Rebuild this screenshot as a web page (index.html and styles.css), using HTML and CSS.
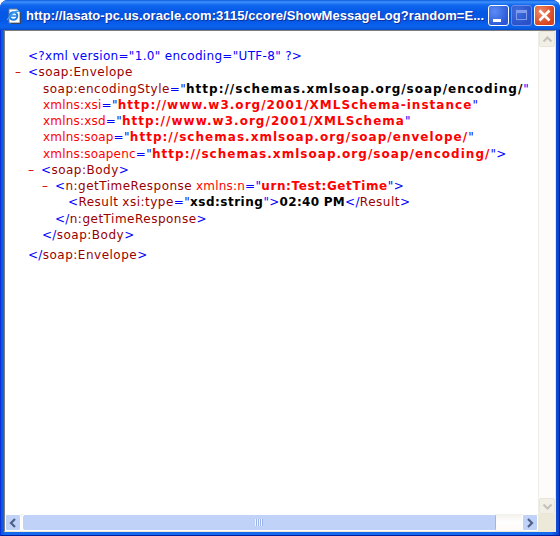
FILE: index.html
```html
<!DOCTYPE html>
<html>
<head>
<meta charset="utf-8">
<title>ShowMessageLog</title>
<link rel="stylesheet" href="styles.css">
</head>
<body>
<div class="window">
  <div class="titlebar">
    <svg class="app-icon" width="16" height="16" viewBox="0 0 16 16">
      <path d="M3 1h8l3 3v11H3z" fill="#fff" stroke="#6b7a90"/>
      <path d="M14.500 4.500V15.500H5" fill="none" stroke="#39465c"/>
      <circle cx="7.500" cy="8" r="3.800" fill="none" stroke="#1f7fe0" stroke-width="2"/>
      <path d="M4 8h7" stroke="#1f7fe0" stroke-width="1.500"/>
      <path d="M1 12C3 9 8 3 13 3" fill="none" stroke="#3aa0f0" stroke-width="1.300"/>
    </svg>
    <div class="title">http://lasato-pc.us.oracle.com:3115/ccore/ShowMessageLog?random=E...</div>
    <div class="controls">
      <div class="ctl ctl-min"><span class="min-glyph"></span></div>
      <div class="ctl ctl-max"><span class="max-glyph"></span></div>
      <div class="ctl ctl-close">
        <svg width="19" height="19" viewBox="0 0 19 19"><path d="M4.500 4.500l10 10M14.500 4.500l-10 10" stroke="#fff" stroke-width="2.600" fill="none"/></svg>
      </div>
    </div>
  </div>
  <div class="client">
    <div class="main-row">
      <div class="doc">
        <div class="ln i1"><span class="b">&lt;?xml version="1.0" encoding="UTF-8" ?&gt;</span></div>
        <div class="ln i0"><span class="dash">–</span><span class="b">&lt;</span><span class="m">soap:Envelope</span></div>
        <div class="ln attr"><span class="m">soap:encodingStyle</span><span class="b">="</span><span class="v">http://schemas.xmlsoap.org/soap/encoding/</span><span class="b">"</span></div>
        <div class="ln attr"><span class="r">xmlns:xsi</span><span class="b">="</span><span class="rv">http://www.w3.org/2001/XMLSchema-instance</span><span class="b">"</span></div>
        <div class="ln attr"><span class="r">xmlns:xsd</span><span class="b">="</span><span class="rv">http://www.w3.org/2001/XMLSchema</span><span class="b">"</span></div>
        <div class="ln attr"><span class="r">xmlns:soap</span><span class="b">="</span><span class="rv">http://schemas.xmlsoap.org/soap/envelope/</span><span class="b">"</span></div>
        <div class="ln attr"><span class="r">xmlns:soapenc</span><span class="b">="</span><span class="rv">http://schemas.xmlsoap.org/soap/encoding/</span><span class="b">"&gt;</span></div>
        <div class="ln i1"><span class="dash">–</span><span class="b">&lt;</span><span class="m">soap:Body</span><span class="b">&gt;</span></div>
        <div class="ln i2"><span class="dash">–</span><span class="b">&lt;</span><span class="m">n:getTimeResponse</span> <span class="r">xmlns:n</span><span class="b">="</span><span class="rv short">urn:Test:GetTime</span><span class="b">"&gt;</span></div>
        <div class="ln i3"><span class="b">&lt;</span><span class="m">Result</span> <span class="m">xsi:type</span><span class="b">="</span><span class="v short">xsd:string</span><span class="b">"&gt;</span><span class="v time">02:40 PM</span><span class="b">&lt;/</span><span class="m">Result</span><span class="b">&gt;</span></div>
        <div class="ln i25"><span class="b">&lt;/</span><span class="m">n:getTimeResponse</span><span class="b">&gt;</span></div>
        <div class="ln i2"><span class="b">&lt;/</span><span class="m">soap:Body</span><span class="b">&gt;</span></div>
        <div class="ln i1 last"><span class="b">&lt;/</span><span class="m">soap:Envelope</span><span class="b">&gt;</span></div>
      </div>
      <div class="vscroll">
        <div class="sbtn-off"><svg width="11" height="7" viewBox="0 0 11 7"><path d="M1.500 5.500l4-4 4 4" fill="none" stroke="#c6c4b8" stroke-width="2.200"/></svg></div>
        <div class="vtrack"></div>
        <div class="sbtn-off"><svg width="11" height="7" viewBox="0 0 11 7"><path d="M1.500 1.500l4 4 4-4" fill="none" stroke="#c6c4b8" stroke-width="2.200"/></svg></div>
      </div>
    </div>
    <div class="bottom-row">
      <div class="hscroll">
        <div class="sbtn"><svg width="8" height="10" viewBox="0 0 8 10"><path d="M6 1L2 5l4 4" fill="none" stroke="#4d6185" stroke-width="2.200"/></svg></div>
        <div class="thumb"><span class="grip"></span></div>
        <div class="htrack"></div>
        <div class="sbtn"><svg width="8" height="10" viewBox="0 0 8 10"><path d="M2 1l4 4-4 4" fill="none" stroke="#4d6185" stroke-width="2.200"/></svg></div>
      </div>
      <div class="corner"></div>
    </div>
  </div>
</div>
</body>
</html>
```
FILE: styles.css
```css
html, body {
  margin: 0;
  padding: 0;
  width: 560px;
  height: 536px;
  overflow: hidden;
  background: #fff;
}
.window {
  width: 560px;
  height: 536px;
  display: flex;
  flex-direction: column;
  box-sizing: border-box;
  padding: 0 3px 3px;
  background: linear-gradient(90deg, #0855dd 0, #166aee 4px, #166aee 550px, #0a40c8 558px);
  border-radius: 8px 8px 0 0;
  border-left: 1px solid #0831d9;
  border-right: 1px solid #001ea0;
  border-bottom: 1px solid #001ea0;
}
.titlebar {
  height: 30px;
  flex: none;
  display: flex;
  align-items: center;
  margin: 0 -4px;
  padding: 0 5px 0 6px;
  border-radius: 8px 8px 0 0;
  background: linear-gradient(180deg, #0a5be0 0, #3f90fb 2px, #0f68ee 5px, #0558e6 12px, #0558e6 21px, #0a63ee 26px, #0b5adc 29px, #0344c4 30px);
}
.app-icon { flex: none; margin-top: 2px; }
.title {
  flex: 1;
  min-width: 0;
  margin-left: 4px;
  font: bold 13px "Liberation Sans", sans-serif;
  letter-spacing: 0.05px;
  color: #fff;
  text-shadow: 1px 1px 0 #0f2f9a;
  white-space: nowrap;
}
.controls { display: flex; gap: 2px; flex: none; }
.ctl {
  width: 21px;
  height: 21px;
  box-sizing: border-box;
  border: 1px solid #fff;
  border-radius: 3px;
  display: flex;
  align-items: center;
  justify-content: center;
}
.ctl-min { background: radial-gradient(circle at 30% 30%, #5c8cf5, #2b58d8 75%); align-items: flex-end; justify-content: flex-start; }
.min-glyph { width: 8px; height: 3px; background: #fff; margin: 0 0 3px 4px; }
.ctl-max { background: radial-gradient(circle at 30% 30%, #3f6fe0, #2a51c8 75%); border-color: #6a8ce6; }
.max-glyph { width: 11px; height: 10px; box-sizing: border-box; border: 1px solid #7f9dec; border-top-width: 3px; }
.ctl-close { background: radial-gradient(circle at 30% 30%, #ec8a68, #d8421c 75%); }
.ctl-close svg { flex: none; }
.client {
  flex: 1;
  min-height: 0;
  display: flex;
  flex-direction: column;
  background: #fff;
  border-top: 1px solid #7f7f7f;
  border-left: 1px solid #7f7f7f;
  border-right: 1px solid #ece9d8;
  border-bottom: 1px solid #ece9d8;
  box-sizing: border-box;
}
.main-row { flex: 1; min-height: 0; display: flex; }
.doc {
  flex: 1;
  min-width: 0;
  overflow: hidden;
  padding-top: 17px;
  font: 12px/16.25px "DejaVu Sans", Verdana, sans-serif;
  white-space: nowrap;
  color: #000;
}
.ln { height: 16.25px; }
.last { margin-top: 3.500px; }
.i0 { padding-left: 10px; }
.i1 { padding-left: 23px; }
.attr { padding-left: 38px; }
.i2 { padding-left: 37px; }
.i25 { padding-left: 50px; }
.i3 { padding-left: 63px; }
.dash { color: #d00000; display: inline-block; width: 13px; }
.b { color: #0000ff; letter-spacing: 0.32px; }
.m { color: #990000; letter-spacing: 0.5px; }
.r { color: #ff0000; letter-spacing: 0.2px; }
.v { color: #000; font-weight: bold; letter-spacing: 1px; }
.rv { color: #ff0000; font-weight: bold; letter-spacing: 1.03px; }
.rv.short { letter-spacing: 0.6px; }
.v.short { letter-spacing: 0.5px; }
.v.time { letter-spacing: 0.3px; }
.vscroll {
  width: 17px;
  flex: none;
  display: flex;
  flex-direction: column;
  background: #fdfcfa;
  border-left: 1px solid #efede4;
  box-sizing: border-box;
}
.vtrack { flex: 1; }
.sbtn-off {
  height: 16px;
  flex: none;
  box-sizing: border-box;
  border: 1px solid #e8e6da;
  border-radius: 2px;
  background: #f2efe6;
  display: flex;
  align-items: center;
  justify-content: center;
}
.bottom-row { flex: none; height: 17px; display: flex; }
.hscroll {
  flex: 1;
  display: flex;
  align-items: stretch;
  background: linear-gradient(180deg, #f3f1ec 0, #fefefe 8px, #fdf9f6 100%);
}
.sbtn {
  width: 16px;
  flex: none;
  box-sizing: border-box;
  border: 1px solid #fff;
  border-radius: 2px;
  background: #c1d2f8;
  display: flex;
  align-items: center;
  justify-content: center;
}
.thumb {
  width: 474px;
  flex: none;
  box-sizing: border-box;
  border: 1px solid #fff;
  border-right-color: #9db5e8;
  border-radius: 3px;
  margin-left: 1px;
  background: #c1d2f8;
  display: flex;
  align-items: center;
  justify-content: center;
}
.grip {
  width: 8px;
  height: 7px;
  background: repeating-linear-gradient(90deg, #eef3fd 0, #eef3fd 1px, #9db5e8 1px, #9db5e8 2px);
}
.htrack { flex: 1; }
.corner { width: 17px; flex: none; background: #ece9d8; }
```
